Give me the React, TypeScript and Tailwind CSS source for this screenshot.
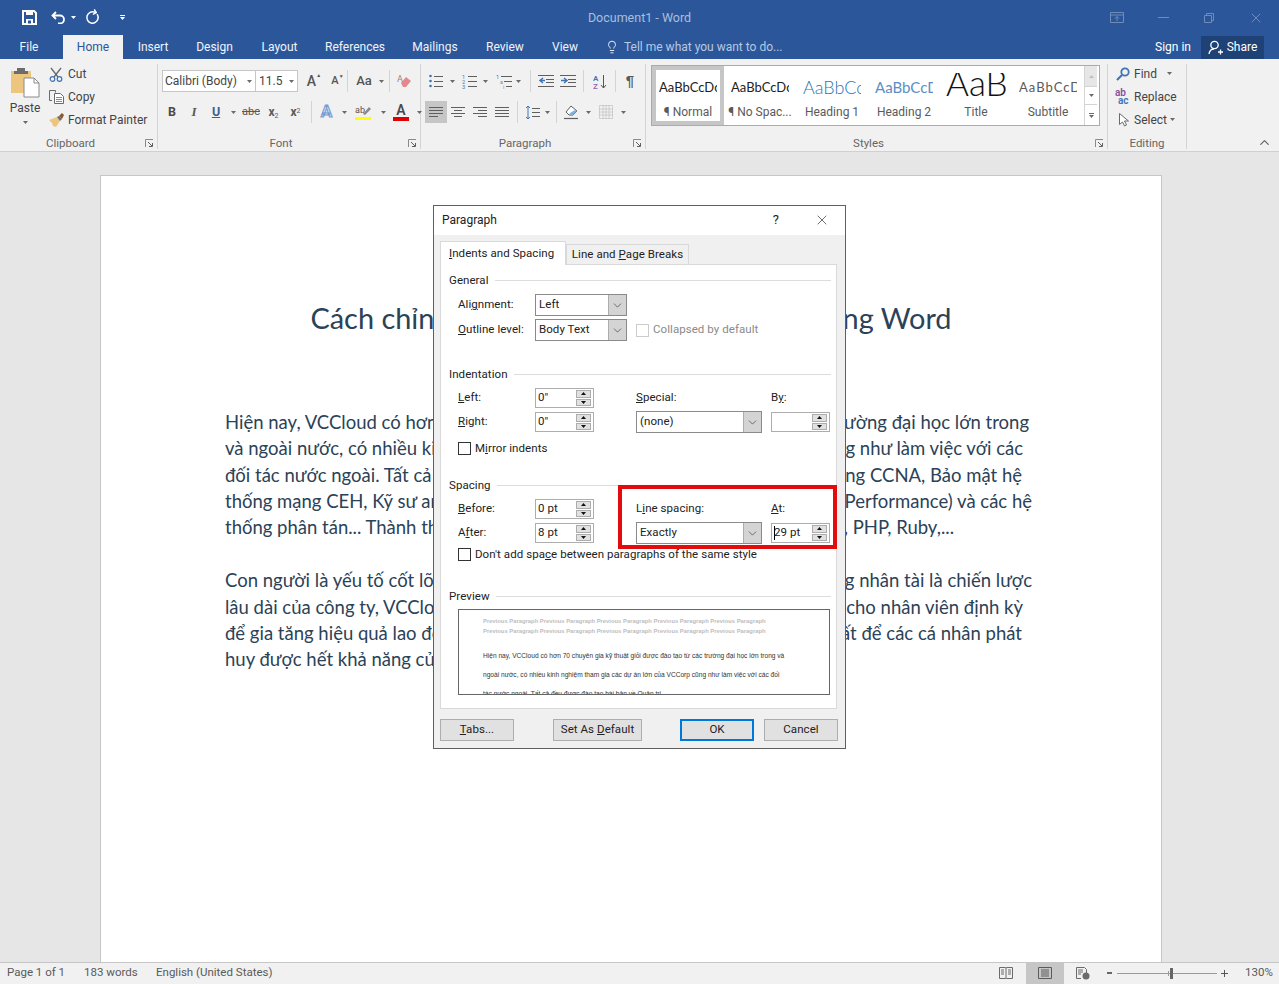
import React from 'react';
import { RotateCcw, Lightbulb, ChevronUp, X, ChevronDown } from 'lucide-react';

const Caret = ({ className = 'text-[#6a6a6a]' }: { className?: string }) => (
  <svg width="5" height="3" viewBox="0 0 5 3" className={`shrink-0 ${className}`}>
    <path d="M0 0h5L2.5 3z" fill="currentColor" />
  </svg>
);

const Sep = ({ className = '' }: { className?: string }) => <div className={`w-px h-[22px] bg-[#d4d4d4] shrink-0 ${className}`} />;

// small tool slot, keeps row spacing even
const Tool = ({ w, children, active }: { w: string; children: React.ReactNode; active?: boolean }) => (
  <div className={`${w} h-[22px] flex items-center justify-center shrink-0 ${active ? 'bg-[#c6c6c6]' : ''}`}>{children}</div>
);

const Lines = ({ ys, x1 = 0, x2 = 14, color = '#5f5f5f' }: { ys: number[]; x1?: number; x2?: number; color?: string }) => (
  <>
    {ys.map((y) => (
      <path key={y} d={`M${x1} ${y}.5H${x2}`} stroke={color} strokeWidth="1" />
    ))}
  </>
);

const Launcher = () => (
  <svg width="9" height="9" viewBox="0 0 9 9" className="absolute right-[3px] bottom-[1px]">
    <path d="M0.5 8V0.5H8" stroke="#8a8a8a" fill="none" />
    <path d="M3 3l4 4M7.5 4v3.5H4" stroke="#5f5f5f" fill="none" />
  </svg>
);

const Group = ({ label, w, children, launcher = true }: { label: string; w: string; children: React.ReactNode; launcher?: boolean }) => (
  <div className={`${w} relative flex flex-col shrink-0 border-r border-[#d4d4d4] mt-[5px] h-[85px]`}>
    <div className="h-[71px] -mt-[5px] shrink-0 relative">{children}</div>
    <div className={`h-[19px] pt-[9px] flex items-center justify-center text-[11.5px] text-[#666666] ${launcher ? 'pr-[16px]' : ''}`}>{label}</div>
    {launcher && <Launcher />}
  </div>
);

const FONT_GROUP_ROW2 = (
  <div className="flex items-center pl-[3px] mt-[9px]">
    <Tool w="w-[22px]"><span className="font-bold text-[12.5px] text-[#4a4a4a]">B</span></Tool>
    <Tool w="w-[22px]"><span className="italic font-['Liberation_Serif',serif] font-bold text-[13px] text-[#5a5a5a]">I</span></Tool>
    <Tool w="w-[22px]"><span className="font-bold underline text-[12.5px] text-[#3f5f8f]">U</span></Tool>
    <Tool w="w-[12px]"><Caret /></Tool>
    <Tool w="w-[24px]"><span className="line-through text-[11px] text-[#5a5a5a]">abc</span></Tool>
    <Tool w="w-[21px]"><span className="font-bold text-[12px] text-[#5a5a5a]">x<sub className="text-[7px] font-normal">2</sub></span></Tool>
    <Tool w="w-[23px]"><span className="font-bold text-[12px] text-[#5a5a5a]">x<sup className="text-[7px] font-normal">2</sup></span></Tool>
    <Sep className="ml-[4px]" />
    <Tool w="w-[29px]"><span className="text-[17px] font-bold text-[#cfe0f5] [-webkit-text-stroke:1px_#6f9bd1]">A</span></Tool>
    <Tool w="w-[6px]"><Caret /></Tool>
    <Tool w="w-[33px]">
      <svg width="17" height="17" viewBox="0 0 17 17">
        <text x="0" y="9" fontSize="9" fill="#555">ab</text>
        <path d="M8 10l6-7 2 2-6 6z" fill="#8a8a8a" />
        <path d="M0 13h16v3H0z" fill="#ffff00" />
      </svg>
    </Tool>
    <Tool w="w-[6px]"><Caret /></Tool>
    <Tool w="w-[30px]">
      <div className="flex flex-col items-center leading-none">
        <span className="text-[14px] leading-[14px] font-semibold text-[#4a4a4a]">A</span>
        <div className="w-[16px] h-[4px] bg-[#e00000]" />
      </div>
    </Tool>
    <Tool w="w-[6px]"><Caret /></Tool>
  </div>
);

const StyleTile = ({ label, preview, cls, selected, w = 'w-[58px]' }: { label: string; preview: string; cls: string; selected?: boolean; w?: string }) => (
  <div className={`w-[72px] h-[59px] shrink-0 flex flex-col items-center ${selected ? 'border-[4px] border-[#c6c6c6]' : 'border-[4px] border-white'}`}>
    <div className={`${w} h-[28px] mt-[3px] overflow-hidden flex whitespace-nowrap justify-start shrink-0 ${cls}`}>{preview}</div>
    <div className="text-[12px] text-[#5a5a5a] whitespace-nowrap mt-[2px]">{label}</div>
  </div>
);

const Ribbon = () => (
  <div className="h-[93px] bg-[#f1f1f1] border-b border-[#d0d0d0] flex shrink-0 font-['Roboto',sans-serif]">
    <Group label="Clipboard" w="w-[158px]">
      <div className="flex h-full">
        <div className="w-[49px] flex flex-col items-center shrink-0 pt-[8px] pl-[1px]">
          <svg width="30" height="31" viewBox="0 0 30 31">
            <path d="M1 4h20v22H1z" fill="#ecc57e" />
            <path d="M7 1h8v3h3v3H4V4h3z" fill="#6c6c6c" />
            <path d="M14 11h10l5 5v14H14z" fill="#fff" stroke="#8a8a8a" />
            <path d="M24 11v5h5" fill="none" stroke="#8a8a8a" />
          </svg>
          <div className="text-[12px] leading-[16px] text-[#444444] mt-[2px]">Paste</div>
          <Caret className="text-[#6a6a6a] mt-[5px]" />
        </div>
        <div className="flex flex-col text-[12px] text-[#444444] pt-[4px]">
          <div className="h-[23px] flex items-center gap-[5px]">
            <svg width="14" height="15" viewBox="0 0 14 15" className="shrink-0">
              <path d="M2 1l7 9M12 1L5 10" stroke="#6a6a6a" strokeWidth="1.3" fill="none" />
              <circle cx="3.5" cy="12" r="2.3" fill="none" stroke="#3f74b5" strokeWidth="1.2" />
              <circle cx="10.5" cy="12" r="2.3" fill="none" stroke="#3f74b5" strokeWidth="1.2" />
            </svg>
            <span>Cut</span>
          </div>
          <div className="h-[23px] pt-[1px] flex items-center gap-[4px]">
            <svg width="15" height="15" viewBox="0 0 15 15" className="shrink-0">
              <path d="M0.5 1.5h6v2M3 11.5H.5v-10" fill="none" stroke="#6a6a6a" />
              <path d="M5.5 4.5h6l3 3v7h-9z" fill="#fff" stroke="#6a6a6a" />
              <path d="M7 8.5h6M7 10.5h6M7 12.5h6" stroke="#8a8a8a" />
            </svg>
            <span>Copy</span>
          </div>
          <div className="h-[23px] pt-[2px] flex items-center gap-[3px]">
            <svg width="16" height="16" viewBox="0 0 16 16" className="shrink-0">
              <path d="M0 8l8-3 3 4-4 6-3-1-1-3z" fill="#ecc57e" />
              <path d="M8 5l3 4 2-2-3-3z" fill="#6c6c6c" />
              <path d="M10 4l3-3 2 2-2 4z" fill="#8a5a2a" />
            </svg>
            <span className="whitespace-nowrap">Format Painter</span>
          </div>
        </div>
      </div>
    </Group>

    <Group label="Font" w="w-[263px]">
      <div className="flex items-center pl-[4px] pt-[11px]">
        <div className="w-[94px] h-[22px] bg-white border border-[#c6c6c6] flex items-center justify-between pl-[2px] pr-[3px] text-[12px] text-[#444444] shrink-0">
          <span className="whitespace-nowrap">Calibri (Body)</span><Caret />
        </div>
        <div className="w-[43px] h-[22px] -ml-px bg-white border border-[#c6c6c6] flex items-center justify-between pl-[3px] pr-[3px] text-[12px] text-[#444444] shrink-0">
          <span>11.5</span><Caret />
        </div>
        <Tool w="w-[25px] ml-[1px]"><span className="text-[14px] font-medium text-[#555555] relative">A<span className="absolute -right-[5px] top-[1px] text-[5px]">▲</span></span></Tool>
        <Tool w="w-[22px]"><span className="text-[11px] font-medium text-[#555555] relative">A<span className="absolute -right-[5px] top-0 text-[5px]">▼</span></span></Tool>
        <Sep className="ml-[1px]" />
        <Tool w="w-[24px] ml-[4px]"><span className="text-[13px] font-medium text-[#555555]">Aa</span></Tool>
        <Tool w="w-[10px]"><Caret /></Tool>
        <Sep className="ml-[3px]" />
        <Tool w="w-[20px] ml-[4px]">
          <svg width="15" height="15" viewBox="0 0 15 15">
            <path d="M4 9L9 3l5 4-5 6H6z" fill="#e8868e" />
            <text x="0" y="8" fontSize="9" fill="#8a8a8a">A</text>
          </svg>
        </Tool>
      </div>
      {FONT_GROUP_ROW2}
    </Group>

    <Group label="Paragraph" w="w-[225px]">
      <div className="flex items-center pl-[7px] pt-[11px]">
        <Tool w="w-[16px]">
          <svg width="14" height="14" viewBox="0 0 14 14"><Lines ys={[2, 7, 12]} x1={5} /><circle cx="1.5" cy="2" r="1.3" fill="#3f74b5" /><circle cx="1.5" cy="7" r="1.3" fill="#3f74b5" /><circle cx="1.5" cy="12" r="1.3" fill="#3f74b5" /></svg>
        </Tool>
        <Tool w="w-[16px]"><Caret /></Tool>
        <Tool w="w-[19px]">
          <svg width="15" height="15" viewBox="0 0 15 15"><Lines ys={[2, 7, 12]} x1={6} x2={15} /><text x="0" y="5" fontSize="5.5" fill="#3f74b5">1</text><text x="0" y="10" fontSize="5.5" fill="#3f74b5">2</text><text x="0" y="15" fontSize="5.5" fill="#3f74b5">3</text></svg>
        </Tool>
        <Tool w="w-[13px]"><Caret /></Tool>
        <Tool w="w-[24px]">
          <svg width="16" height="15" viewBox="0 0 16 15"><Lines ys={[2]} x1={5} x2={16} /><Lines ys={[7]} x1={8} x2={16} /><Lines ys={[12]} x1={10} x2={16} /><text x="0" y="5" fontSize="5.5" fill="#3f74b5">1</text><text x="4" y="10" fontSize="5.5" fill="#888">a</text><text x="7" y="15" fontSize="5.5" fill="#888">i</text></svg>
        </Tool>
        <Tool w="w-[4px]"><Caret /></Tool>
        <Sep className="ml-[10px]" />
        <Tool w="w-[27px] ml-[1px]">
          <svg width="16" height="12" viewBox="0 0 16 12"><Lines ys={[0, 11]} x1={0} x2={16} /><Lines ys={[4, 7]} x1={8} x2={16} /><path d="M7 5.5H3M5 3L2 5.5 5 8" stroke="#3f74b5" strokeWidth="1.5" fill="none" /></svg>
        </Tool>
        <Tool w="w-[18px]">
          <svg width="16" height="12" viewBox="0 0 16 12"><Lines ys={[0, 11]} x1={0} x2={16} /><Lines ys={[4, 7]} x1={8} x2={16} /><path d="M1 5.5h5M4 3l3 2.5L4 8" stroke="#3f74b5" strokeWidth="1.5" fill="none" /></svg>
        </Tool>
        <Sep className="ml-[6px]" />
        <Tool w="w-[31px]">
          <svg width="13" height="15" viewBox="0 0 13 15"><text x="0" y="7" fontSize="8" fill="#3f74b5" fontWeight="600">A</text><text x="0" y="15" fontSize="8" fill="#a060b0" fontWeight="600">Z</text><path d="M10.5 1v13M8 11l2.5 3 2.5-3" stroke="#555" fill="none" /></svg>
        </Tool>
        <Sep />
        <Tool w="w-[28px]"><span className="font-['Liberation_Sans',sans-serif] text-[15px] text-[#5a5a5a] font-bold">¶</span></Tool>
      </div>
      <div className="flex items-center pl-[4px] mt-[9px]">
        <Tool w="w-[22px]" active>
          <svg width="14" height="11" viewBox="0 0 14 11"><Lines ys={[0, 3, 6]} x2={14} /><Lines ys={[9]} x2={9} /></svg>
        </Tool>
        <Tool w="w-[22px]">
          <svg width="14" height="11" viewBox="0 0 14 11"><Lines ys={[0, 6]} x2={14} /><Lines ys={[3, 9]} x1={3} x2={11} /></svg>
        </Tool>
        <Tool w="w-[22px]">
          <svg width="14" height="11" viewBox="0 0 14 11"><Lines ys={[0, 6]} x2={14} /><Lines ys={[3, 9]} x1={5} x2={14} /></svg>
        </Tool>
        <Tool w="w-[22px]">
          <svg width="14" height="11" viewBox="0 0 14 11"><Lines ys={[0, 3, 6, 9]} x2={14} /></svg>
        </Tool>
        <Sep className="ml-[4px]" />
        <Tool w="w-[22px] ml-[3px]">
          <svg width="15" height="15" viewBox="0 0 15 15"><path d="M3 1v13M1 3l2-2 2 2M1 12l2 2 2-2" stroke="#3f74b5" fill="none" /><Lines ys={[3, 7, 11]} x1={7} x2={15} /></svg>
        </Tool>
        <Tool w="w-[8px]"><Caret /></Tool>
        <Sep className="ml-[5px]" />
        <Tool w="w-[25px] ml-[2px]">
          <svg width="18" height="16" viewBox="0 0 18 16"><path d="M3 8l5-6 6 5-4 4H6z" fill="#fff" stroke="#5f5f5f" /><path d="M7 9l5-3 2 1-4 4H6z" fill="#7fb2de" /><path d="M1 14.5h14" stroke="#5f5f5f" strokeWidth="1.2" /></svg>
        </Tool>
        <Tool w="w-[8px]"><Caret /></Tool>
        <Tool w="w-[24px] ml-[2px]">
          <svg width="14" height="14" viewBox="0 0 14 14"><path d="M.5.5h13v13H.5zM7 .5v13M.5 7h13M.5 4h13M.5 10h13M4 .5v13M10 .5v13" stroke="#b0b0b0" strokeDasharray="1 1" fill="none" /></svg>
        </Tool>
        <Tool w="w-[10px]"><Caret /></Tool>
      </div>
    </Group>

    <Group label="Styles" w="w-[462px]">
      <div className="pl-[5px] pt-[6px]">
        <div className="w-[449px] h-[61px] bg-white border border-[#ababab] flex">
          <StyleTile label="¶ Normal" preview="AaBbCcDc" cls="font-['Lato',sans-serif] text-[13px] leading-[28px] text-[#222222]" selected />
          <StyleTile label="¶ No Spac..." preview="AaBbCcDc" cls="font-['Lato',sans-serif] text-[13px] leading-[28px] text-[#222222]" />
          <StyleTile label="Heading 1" preview="AaBbCc" cls="font-['Lato',sans-serif] font-light text-[18px] leading-[28px] text-[#2e74b5]" />
          <StyleTile label="Heading 2" preview="AaBbCcD" cls="font-['Lato',sans-serif] text-[15px] leading-[28px] text-[#5b8fc4]" />
          <StyleTile label="Title" preview="AaB" cls="font-['Lato',sans-serif] font-light text-[35px] leading-[18px] text-[#111111] justify-center" w="w-[60px]" />
          <StyleTile label="Subtitle" preview="AaBbCcD" cls="font-['Lato',sans-serif] text-[13px] leading-[28px] tracking-[1px] text-[#5a5a5a]" />
          <div className="w-[13px] flex flex-col border-l border-[#d4d4d4] shrink-0 ml-[0px]">
            <div className="h-[21px] bg-[#e6e6e6] flex items-center justify-center border-b border-[#d4d4d4]"><svg width="5" height="3" viewBox="0 0 5 3"><path d="M0 3h5L2.5 0z" fill="#c0c0c0" /></svg></div>
            <div className="h-[18px] flex items-center justify-center border-b border-[#d4d4d4]"><Caret /></div>
            <div className="flex-1 flex flex-col items-center justify-center gap-[1px]"><div className="w-[5px] h-px bg-[#6a6a6a]" /><Caret /></div>
          </div>
        </div>
      </div>
    </Group>

    <Group label="Editing" w="w-[79px]" launcher={false}>
      <div className="flex flex-col text-[12px] text-[#444444] pt-[3px] pl-[7px]">
        <div className="h-[23px] flex items-center">
          <svg width="14" height="14" viewBox="0 0 14 14" className="ml-[1px] mr-[4px] shrink-0"><circle cx="9" cy="5" r="3.7" fill="none" stroke="#3f74b5" strokeWidth="1.8" /><path d="M6 8l-5 5" stroke="#3f74b5" strokeWidth="2.2" /></svg>
          <span>Find</span><Caret className="text-[#6a6a6a] ml-[10px]" />
        </div>
        <div className="h-[23px] flex items-center">
          <span className="w-[19px] text-[10px] leading-[8px] font-semibold shrink-0"><span className="text-[#8a4fa0]">ab</span><br /><span className="text-[#3f74b5] pl-[3px]">ac</span></span>
          <span>Replace</span>
        </div>
        <div className="h-[23px] flex items-center">
          <svg width="10" height="14" viewBox="0 0 10 14" className="ml-[4px] mr-[5px] shrink-0"><path d="M.5.5v11l3-2.500 2 4 2-1-2-4h4z" fill="#fff" stroke="#6a6a6a" /></svg>
          <span>Select</span><Caret className="text-[#6a6a6a] ml-[3px]" />
        </div>
      </div>
    </Group>

    <div className="flex-1 flex items-end justify-end pr-[7px] pb-[1px]">
      <ChevronUp size={15} strokeWidth={2} className="text-[#666666]" />
    </div>
  </div>
);

const TABS = [
  { name: 'Insert', w: 'w-[58px]' },
  { name: 'Design', w: 'w-[65px]' },
  { name: 'Layout', w: 'w-[65px]' },
  { name: 'References', w: 'w-[86px]' },
  { name: 'Mailings', w: 'w-[74px]' },
  { name: 'Review', w: 'w-[66px]' },
  { name: 'View', w: 'w-[54px]' },
];

const TitleBar = () => (
  <div className="bg-[#2b579a] shrink-0 font-['Roboto',sans-serif]">
    <div className="h-[35px] flex items-center relative">
      <svg width="15" height="15" viewBox="0 0 15 15" className="ml-[22px]">
        <path d="M1 1h11l2 2v11H1z" fill="none" stroke="#fff" strokeWidth="2" />
        <path d="M4 1h7v4H4zM4 9h7v5H4z" fill="#fff" />
        <path d="M6 10.500h3v3H6z" fill="#2b579a" />
      </svg>
      <svg width="15" height="13" viewBox="0 0 15 13" className="ml-[14px]">
        <path d="M5 1L1.500 4.500 5 8M2 4.500h7a4 4 0 0 1 0 8H7" stroke="#fff" strokeWidth="1.800" fill="none" />
      </svg>
      <Caret className="text-white ml-[5px]" />
      <RotateCcw size={15} strokeWidth={2.4} className="text-white ml-[9px] scale-x-[-1] rotate-[-30deg]" />
      <div className="ml-[20px] flex flex-col items-center gap-[1px]"><div className="w-[5px] h-px bg-white" /><Caret className="text-white" /></div>
      <div className="absolute left-0 right-0 pt-[1px] text-center text-[12.5px] text-[#a9bedd] pointer-events-none">Document1 - Word</div>
      <div className="ml-auto flex items-center text-[#6f8cba]">
        <svg width="14" height="11" viewBox="0 0 14 11" className="mr-[34px]"><path d="M.5.5h13v10H.5zM.5 3h13M7 9V4.500M5 6.500l2-2 2 2" stroke="currentColor" fill="none" /></svg>
        <div className="w-[11px] h-px bg-current mr-[35px]" />
        <svg width="10" height="10" viewBox="0 0 10 10" className="mr-[34px]"><path d="M.5 2.500h7v7h-7zM2.500 2.500v-2h7v7h-2" stroke="currentColor" fill="none" /></svg>
        <X size={16} strokeWidth={1.5} className="mr-[15px]" />
      </div>
    </div>
    <div className="h-[24px] flex items-stretch text-[12px] text-[#f0f4fa] relative">
      <div className="w-[63px] flex items-center justify-center pr-[5px]">File</div>
      <div className="w-[60px] bg-[#f1f1f1] text-[#2b579a] flex items-center justify-center">Home</div>
      <div className="w-[1px]" />
      {TABS.map((t) => (
        <div key={t.name} className={`${t.w} flex items-center justify-center`}>{t.name}</div>
      ))}
      <div className="flex items-center ml-[13px] text-[#b8c8e2]">
        <Lightbulb size={14} strokeWidth={1.5} className="text-white mr-[5px]" />
        <span className="whitespace-nowrap">Tell me what you want to do...</span>
      </div>
      <div className="ml-auto flex items-center">
        <span className="mr-[10px] text-white">Sign in</span>
        <div className="w-[63px] h-[23px] bg-[#1e4275] flex items-center justify-center gap-[4px] mr-[15px] text-white">
          <svg width="15" height="15" viewBox="0 0 15 15"><circle cx="6.500" cy="5" r="3.700" fill="none" stroke="#fff" strokeWidth="1.300" /><path d="M1 14c.5-3.500 2.500-5 5-5M10 12h5M12.500 9.500v5" stroke="#fff" strokeWidth="1.300" fill="none" /></svg>
          <span>Share</span>
        </div>
      </div>
    </div>
  </div>
);

// left and right parts of each line, the dialog hides what is between them
const PARA1 = [
  { l: 'Hiện nay, VCCloud có hơn 70 chuyên gia kỹ thuật giỏi được', r: 'đào tạo từ các trường đại học lớn trong', w: 'w-[804px]' },
  { l: 'và ngoài nước, có nhiều kinh nghiệm tham gia các dự án', r: 'lớn của VCCorp cũng như làm việc với các', w: 'w-[798px]' },
  { l: 'đối tác nước ngoài. Tất cả đều được đào tạo bài bản về', r: 'Quản trị hệ thống CCNA, Bảo mật hệ', w: 'w-[797px]' },
  { l: 'thống mạng CEH, Kỹ sư an ninh, Phân tích và', r: 'tối ưu hiệu năng (Performance) và các hệ', w: 'w-[807px]' },
  { l: 'thống phân tán... Thành thạo nhiều ngôn ngữ', r: 'Java, PHP, Ruby,...', w: 'w-[729px]' },
];
const PARA2 = [
  { l: 'Con người là yếu tố cốt lõi của VCCloud, vì vậy', r: 'việc thu hút những nhân tài là chiến lược', w: 'w-[807px]' },
  { l: 'lâu dài của công ty, VCCloud luôn tổ chức các', r: 'khóa đào tạo chuyên sâu cho nhân viên định kỳ', w: 'w-[798px]' },
  { l: 'để gia tăng hiệu quả lao động, đồng thời tạo', r: 'môi trường tốt nhất để các cá nhân phát', w: 'w-[797px]' },
  { l: 'huy được hết khả năng của mình.', r: '', w: 'w-[400px]' },
];

const Page = () => (
  <div className="flex-1 min-h-0 bg-[#e6e6e6] pt-[23px] pl-[100px] overflow-hidden">
    <div className="w-[1062px] h-[800px] bg-white border border-[#c6c6c6] pl-[124px] pt-[122px] font-['Lato',sans-serif] text-[#2b4257]">
      <div className="w-[812px] text-center text-[28.900px] leading-[40px] whitespace-nowrap">Cách chỉnh khoảng cách giữa các dòng trong Word</div>
      <div className="mt-[71px] text-[18.500px] leading-[26.300px]">
        {PARA1.map((p) => <div key={p.l} className={`${p.w} flex justify-between whitespace-nowrap`}><span>{p.l}</span><span>{p.r}</span></div>)}
      </div>
      <div className="mt-[27px] text-[18.500px] leading-[26.300px]">
        {PARA2.map((p) => <div key={p.l} className={`${p.w} flex justify-between whitespace-nowrap`}><span>{p.l}</span><span>{p.r}</span></div>)}
      </div>
    </div>
  </div>
);

const StatusBar = () => (
  <div className="h-[22px] pb-[1px] bg-[#f1f1f1] border-t border-[#c6c6c6] flex items-center shrink-0 text-[11.500px] text-[#5a5a5a] font-['Roboto',sans-serif]">
    <span className="ml-[7px] w-[56px] whitespace-nowrap">Page 1 of 1</span>
    <span className="ml-[21px] w-[53px] whitespace-nowrap">183 words</span>
    <span className="ml-[19px] whitespace-nowrap">English (United States)</span>
    <div className="ml-auto flex items-center h-full">
      <svg width="14" height="12" viewBox="0 0 14 12"><path d="M.5.5h6l.5 1 .5-1h6v11h-6l-.5-.5-.5.5h-6zM7 1.500v10M2 3h3M2 5h3M2 7h3M9 3h3M9 5h3M9 7h3" stroke="#6a6a6a" fill="none" /></svg>
      <div className="w-[38px] h-[22px] bg-[#c6c6c6] flex items-center justify-center ml-[13px]">
        <svg width="14" height="12" viewBox="0 0 14 12"><path d="M.5.5h13v11H.5zM3 3h8M3 5h8M3 7h8M3 9h8" stroke="#5a5a5a" fill="none" /></svg>
      </div>
      <svg width="14" height="13" viewBox="0 0 14 13" className="ml-[12px]"><path d="M.5.5h8l2 2V6M.5.5v11H5M2 3h5M2 5h5M2 7h3" stroke="#6a6a6a" fill="none" /><circle cx="10" cy="9" r="3.500" fill="#6a6a6a" /></svg>
      <div className="w-[5px] h-[2px] bg-[#666666] ml-[17px]" />
      <div className="w-[100px] h-px bg-[#9a9a9a] ml-[5px] relative">
        <div className="absolute left-[53px] -top-[5px] w-[3px] h-[11px] bg-[#666666]" />
        <div className="absolute left-[51px] -top-[2px] w-px h-[5px] bg-[#9a9a9a]" />
      </div>
      <div className="ml-[4px] relative w-[7px] h-[7px]">
        <div className="absolute left-0 top-[3px] w-[7px] h-px bg-[#555555]" />
        <div className="absolute left-[3px] top-0 w-px h-[7px] bg-[#555555]" />
      </div>
      <span className="w-[27px] ml-[17px] mr-[7px]">130%</span>
    </div>
  </div>
);

const Check = ({ disabled }: { disabled?: boolean }) => (
  <div className={`w-[13px] h-[13px] border bg-white shrink-0 ${disabled ? 'border-[#cccccc]' : 'border-[#333333]'}`} />
);

const Select = ({ w, value }: { w: string; value: string }) => (
  <div className={`${w} h-[22px] -my-px bg-white border border-[#8a8a8a] flex items-center justify-between pl-[3px]`}>
    <span>{value}</span>
    <div className="w-[18px] h-full bg-[#d4d4d4] border-l border-[#adadad] flex items-center justify-center">
      <ChevronDown size={13} strokeWidth={1.200} className="text-[#333333]" />
    </div>
  </div>
);

const Spin = ({ value, caret }: { value: string; caret?: boolean }) => (
  <div className="w-[59px] h-[20px] bg-white border border-[#adadad] flex items-center justify-between pl-[2px] pr-[2px]">
    <span className="flex items-center">
      {caret && <span className="w-px h-[14px] bg-black -mr-px" />}
      {value}
    </span>
    <div className="w-[15px] h-[16px] flex flex-col gap-px">
      <div className="flex-1 bg-[#e1e1e1] border border-[#adadad] flex items-center justify-center"><svg width="5" height="3" viewBox="0 0 5 3"><path d="M0 3h5L2.500 0z" fill="#111" /></svg></div>
      <div className="flex-1 bg-[#e1e1e1] border border-[#adadad] flex items-center justify-center"><svg width="5" height="3" viewBox="0 0 5 3"><path d="M0 0h5L2.500 3z" fill="#111" /></svg></div>
    </div>
  </div>
);

const Heading = ({ children, className = '' }: { children: React.ReactNode; className?: string }) => (
  <div className={`h-[14px] flex items-center gap-[6px] ${className}`}>
    <span>{children}</span>
    <div className="flex-1 h-px bg-[#dcdcdc] -mt-[2px]" />
  </div>
);

const DlgButton = ({ children, w, primary }: { children: React.ReactNode; w: string; primary?: boolean }) => (
  <div className={`${w} h-[22px] bg-[#e1e1e1] flex items-center justify-center ${primary ? 'border-2 border-[#0078d7]' : 'border border-[#adadad]'}`}>{children}</div>
);

const PREV_GREY = 'Previous Paragraph Previous Paragraph Previous Paragraph Previous Paragraph Previous Paragraph';

const Dialog = () => (
  <div className="absolute left-[433px] top-[205px] w-[413px] h-[544px] bg-[#f0f0f0] border border-[#5f5f5f] flex flex-col text-[11.500px] tracking-[0.06px] text-[#222222] font-['Roboto',sans-serif]">
    <div className="h-[29px] bg-white flex items-center pl-[8px] pb-[1px] shrink-0">
      <span className="text-[12px] tracking-normal">Paragraph</span>
      <span className="ml-auto text-[13px] mr-[35px]">?</span>
      <X size={16} strokeWidth={1} className="mr-[15px] text-[#222222]" />
    </div>
    <div className="flex pl-[6px] pt-[6px] shrink-0 h-[29px] items-end">
      <div className="w-[126px] h-[24px] bg-white border border-b-0 border-[#d9d9d9] relative z-10 -mb-px flex items-center pl-[8px]"><span><u>I</u>ndents and Spacing</span></div>
      <div className="w-[123px] h-[20px] bg-[#f0f0f0] border border-b-0 border-[#d9d9d9] flex items-center justify-center"><span>Line and <u>P</u>age Breaks</span></div>
    </div>
    <div className="ml-[6px] w-[397px] h-[445px] bg-white border border-[#d9d9d9] pl-[8px] pr-[5px] pt-[9px] shrink-0">
      <Heading>General</Heading>
      <div className="ml-[9px] mt-[7px] grid grid-cols-[77px_92px_1fr] items-center gap-y-[5px]">
        <span>Ali<u>g</u>nment:</span>
        <Select w="w-[92px]" value="Left" />
        <span />
        <span><u>O</u>utline level:</span>
        <Select w="w-[92px]" value="Body Text" />
        <div className="flex items-center gap-[4px] pl-[9px] text-[#8a8a8a]"><Check disabled /><span>Collapsed by default</span></div>
      </div>
      <Heading className="mt-[28px]">Indentation</Heading>
      <div className="ml-[9px] mt-[6px] grid grid-cols-[77px_59px_42px_135px_59px] grid-rows-[20px_20px] items-center gap-y-[4px]">
        <span><u>L</u>eft:</span>
        <Spin value="0&quot;" />
        <span />
        <span><u>S</u>pecial:</span>
        <span>B<u>y</u>:</span>
        <span><u>R</u>ight:</span>
        <Spin value="0&quot;" />
        <span />
        <Select w="w-[126px]" value="(none)" />
        <Spin value="" />
      </div>
      <div className="ml-[9px] mt-[10px] flex items-center gap-[4px] h-[13px]"><Check /><span>M<u>i</u>rror indents</span></div>
      <Heading className="mt-[24px]">Spacing</Heading>
      <div className="ml-[9px] mt-[6px] grid grid-cols-[77px_59px_42px_135px_59px] grid-rows-[20px_20px] items-center gap-y-[4px]">
        <span><u>B</u>efore:</span>
        <Spin value="0 pt" />
        <span />
        <span>L<u>i</u>ne spacing:</span>
        <span><u>A</u>t:</span>
        <span>A<u>f</u>ter:</span>
        <Spin value="8 pt" />
        <span />
        <Select w="w-[126px]" value="Exactly" />
        <Spin value="29 pt" caret />
      </div>
      <div className="ml-[9px] mt-[5px] flex items-center gap-[4px] h-[13px]"><Check /><span>Don't add spa<u>c</u>e between paragraphs of the same style</span></div>
      <Heading className="mt-[29px]">Preview</Heading>
      <div className="ml-[9px] mt-[5px] w-[372px] h-[86px] bg-white border border-[#666666] pl-[24px] overflow-hidden font-['Liberation_Sans',sans-serif] tracking-normal">
        <div className="text-[#bdbdbd] text-[5.850px] mt-[6px] leading-[10px] whitespace-nowrap font-bold">{PREV_GREY}</div>
        <div className="text-[#bdbdbd] text-[5.850px] leading-[10px] whitespace-nowrap font-bold">{PREV_GREY}</div>
        <div className="mt-[10px] text-[6.600px] leading-[19px] text-[#333333] whitespace-nowrap">
          <div>Hiện nay, VCCloud có hơn 70 chuyên gia kỹ thuật giỏi được đào tạo từ các trường đại học lớn trong và</div>
          <div>ngoài nước, có nhiều kinh nghiệm tham gia các dự án lớn của VCCorp cũng như làm việc với các đối</div>
          <div>tác nước ngoài. Tất cả đều được đào tạo bài bản về Quản trị</div>
        </div>
      </div>
    </div>
    <div className="flex items-center pl-[6px] pt-[10px]">
      <DlgButton w="w-[74px]"><span><u>T</u>abs...</span></DlgButton>
      <div className="ml-[39px]"><DlgButton w="w-[89px]"><span>Set As <u>D</u>efault</span></DlgButton></div>
      <div className="ml-[38px]"><DlgButton w="w-[74px]" primary>OK</DlgButton></div>
      <div className="ml-[10px]"><DlgButton w="w-[74px]">Cancel</DlgButton></div>
    </div>
    {/* red annotation drawn over the screenshot */}
    <div className="absolute left-[184px] top-[279px] w-[219px] h-[64px] border-[4px] border-[#e30b0b]" />
  </div>
);

export default function App() {
  return (
    <div className="w-[1279px] h-[984px] relative overflow-hidden flex flex-col">
      <TitleBar />
      <Ribbon />
      <Page />
      <StatusBar />
      <Dialog />
    </div>
  );
}
